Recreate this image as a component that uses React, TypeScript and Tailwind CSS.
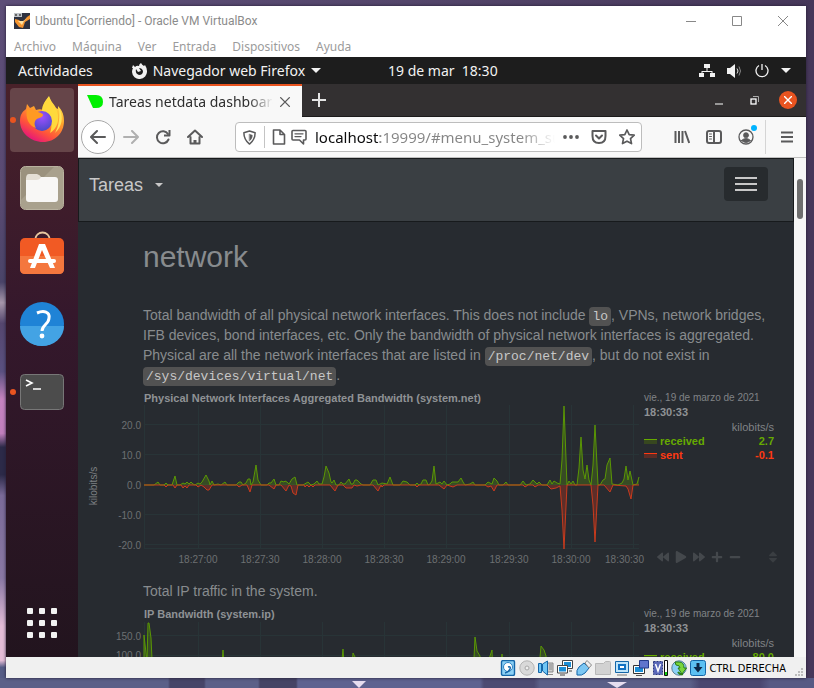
import type { ReactNode } from "react";
import {
  FaBackward, FaPlay, FaForward, FaPlus, FaMinus, FaSort,
} from "react-icons/fa";

type Point = [number, number];

const GRID_X = [56, 110, 172, 234, 296, 358, 421, 483, 545];
const TIMES = ["18:27:00", "18:27:30", "18:28:00", "18:28:30", "18:29:00", "18:29:30", "18:30:00"];

const RECEIVED: Point[] = [
  [0, 0], [10, 0], [14, 3], [16, 0], [20, 0], [22, 2], [24, 0], [28, 0], [31, 9], [33, 0], [36, 0], [39, 2], [41, 1],
  [43, 3], [45, 1], [47, 3], [49, 1], [51, 0], [54, 2], [56, 1], [58, 3], [62, 10], [65, 4], [66, 0], [68, 4], [70, 0],
  [74, 1], [77, 0], [81, 3], [83, 0], [92, 0], [95, 3], [97, 3], [99, 0], [102, 2], [104, 6], [106, 6], [107, 0],
  [109, 3], [112, 20], [114, 5], [117, 0], [123, 0], [125, 2], [127, 2], [130, 6], [132, 0], [135, 0], [137, 4],
  [140, 3], [141, 4], [143, 3], [145, 1], [148, 6], [151, 8], [153, 0], [159, 0], [164, 3], [167, 0], [170, 1],
  [173, 4], [175, 1], [178, 1], [180, 8], [182, 19], [185, 12], [187, 3], [188, 2], [190, 5], [192, 0], [195, 0],
  [197, 3], [199, 1], [201, 1], [205, 6], [207, 1], [209, 1], [211, 5], [213, 5], [217, 1], [219, 0], [226, 0],
  [229, 5], [232, 5], [234, 0], [238, 2], [243, 1], [246, 8], [249, 0], [256, 0], [259, 4], [263, 3], [266, 0],
  [271, 0], [273, 2], [275, 0], [277, 1], [279, 5], [282, 5], [284, 0], [286, 1], [288, 4], [290, 19], [292, 1],
  [296, 3], [298, 1], [300, 4], [303, 0], [306, 1], [308, 3], [314, 3], [317, 7], [319, 3], [321, 0], [326, 1],
  [329, 3], [331, 0], [341, 0], [344, 3], [348, 1], [350, 7], [353, 4], [355, 0], [359, 0], [362, 3], [364, 0],
  [376, 0], [379, 4], [382, 0], [386, 1], [389, 5], [393, 1], [395, 3], [398, 0], [403, 0], [406, 5], [408, 1],
  [410, 4], [413, 2], [416, 1], [418, 25], [420, 79], [423, 0], [425, 4], [427, 1], [429, 4], [431, 0], [433, 0],
  [435, 17], [437, 48], [439, 15], [441, 6], [443, 20], [445, 5], [447, 0], [449, 20], [451, 60], [454, 0],
  [456, 0], [459, 5], [461, 6], [463, 20], [466, 27], [468, 1], [474, 0], [478, 2], [480, 6], [482, 19], [484, 5],
  [486, 14], [489, 0], [493, 1], [495, 8],
];

const SENT: Point[] = [
  [0, 0], [20, 0], [22, 2], [24, 0], [29, 0], [31, 3], [33, 0], [37, 0], [39, 3], [41, 1], [43, 3], [45, 0], [52, 0],
  [54, 2], [57, 0], [60, 2], [63, 5], [65, 5], [68, 0], [93, 0], [95, 2], [98, 0], [103, 0], [106, 7], [108, 0],
  [125, 0], [130, 4], [132, 0], [137, 0], [142, 6], [145, 0], [147, 1], [149, 8], [152, 10], [154, 0], [160, 0],
  [161, 2], [163, 0], [165, 2], [167, 0], [169, 2], [171, 0], [186, 0], [191, 6], [194, 0], [199, 0], [202, 3],
  [208, 3], [210, 0], [213, 1], [217, 0], [229, 0], [234, 6], [237, 0], [238, 2], [240, 0], [271, 0], [273, 2],
  [275, 0], [295, 0], [300, 4], [303, 0], [309, 2], [313, 0], [341, 0], [344, 2], [347, 1], [350, 6], [353, 0],
  [379, 0], [381, 2], [384, 0], [389, 0], [391, 2], [394, 0], [403, 0], [407, 4], [412, 3], [416, 1], [418, 25],
  [420, 64], [423, 0], [447, 0], [449, 20], [451, 57], [454, 0], [460, 0], [466, 7], [469, 0], [482, 1], [484, 4],
  [487, 14], [489, 0], [495, 0],
];

const line = (data: Point[], sign: number) =>
  data.map(([x, h]) => `${56 + x},${82 - sign * h}`).join(" ");

function Code({ children }: { children: ReactNode }) {
  return (
    <code className="rounded bg-[#525252] px-[3px] py-0.5 font-['Liberation_Mono',monospace] text-[13px] leading-none text-[#c8c8c8]">
      {children}
    </code>
  );
}

function GridLines({ rows, bottom }: { rows: number[]; bottom: number }) {
  return (
    <g stroke="#283437" strokeWidth="1" shapeRendering="crispEdges">
      {GRID_X.map((x) => <line key={x} x1={x + 0.5} x2={x + 0.5} y1="2" y2={bottom} />)}
      {rows.map((y) => <line key={y} x1="56" x2="551" y1={y + 0.5} y2={y + 0.5} />)}
    </g>
  );
}

function NetChart() {
  return (
    <svg width="556" height="162" viewBox="0 2 556 162" className="shrink-0 overflow-visible font-['Liberation_Sans',Arial,sans-serif] text-[10px]" role="img" aria-label="Bandwidth chart">
      <GridLines rows={[21, 51, 81, 111, 141, 145]} bottom={146} />
      <polygon points={`56,82 ${line(RECEIVED, 1)} 551,82`} fill="#66aa00" fillOpacity=".25" />
      <polygon points={`56,82 ${line(SENT, -1)} 551,82`} fill="#fe3912" fillOpacity=".25" />
      <polyline points={line(RECEIVED, 1)} fill="none" stroke="#5a9704" strokeWidth="1" />
      <polyline points={line(SENT, -1)} fill="none" stroke="#c83b1d" strokeWidth="1" />
      <g fill="#6d7072">
        {["20.0", "10.0", "0.0", "-10.0", "-20.0"].map((t, i) => (
          <text key={t} x="53" y={26 + i * 30} textAnchor="end">{t}</text>
        ))}
        {TIMES.map((t, i) => (
          <text key={t} x={GRID_X[i + 1]} y="160" textAnchor="middle">{t}</text>
        ))}
        <text x="556" y="160" textAnchor="end">18:30:30</text>
      </g>
      <text transform="translate(9 83) rotate(-90)" textAnchor="middle" fill="#7d8083">kilobits/s</text>
    </svg>
  );
}

function IpChart() {
  return (
    <svg width="556" height="163" viewBox="0 1 556 163" className="shrink-0 font-['Liberation_Sans',Arial,sans-serif] text-[10px]" role="img" aria-label="IP bandwidth chart">
      <GridLines rows={[15, 35]} bottom={146} />
      <polygon
        points="56,60 56,15 59,42 60,3 61,3 63,18 65,60 133,60 135,30 137,60 252,60 255,29 257,60 263,60 265,33 267,37 269,60 385,60 387,17 389,31 392,36 393,60 402,36 404,30 405,60 412,60 414,34 416,60 450,60 453,26 456,30 458,36 460,60"
        fill="#66aa00" fillOpacity=".25" stroke="#5a9704" strokeWidth="1"
      />
      <g fill="#6d7072">
        <text x="53" y="20" textAnchor="end">150.0</text>
        <text x="53" y="39" textAnchor="end">100.0</text>
      </g>
    </svg>
  );
}

function Legend({ rows, children }: { rows: { name: string; value: string; tone: string; swatch: string }[]; children?: ReactNode }) {
  return (
    <aside className="flex w-[136px] shrink-0 flex-col">
      <p className="text-[10px] leading-[14px] text-[#808386]">vie., 19 de marzo de 2021</p>
      <p className="text-[11px] leading-[14px] font-bold text-[#8f9295]">18:30:33</p>
      <table className="w-[130px] text-[11px] leading-[14px] font-bold">
        <thead>
          <tr className="text-right font-normal text-[#808386]">
            <th colSpan={2} className="p-0 pt-[1px] text-right font-normal">kilobits/s</th>
          </tr>
        </thead>
        <tbody>
          {rows.map((r) => (
            <tr key={r.name} className={r.tone}>
              <td className="p-0">
                <span className="flex items-center gap-[3px]">
                  <span className={`h-[5px] w-[13px] border-t ${r.swatch}`} />
                  {r.name}
                </span>
              </td>
              <td className="p-0 text-right">{r.value}</td>
            </tr>
          ))}
        </tbody>
      </table>
      {children}
    </aside>
  );
}

const GREEN_ROW = { name: "received", tone: "text-[#66aa00]", swatch: "border-[#66aa00] bg-[#37471f]" };
const RED_ROW = { name: "sent", tone: "text-[#fe3912]", swatch: "border-[#fe3912] bg-[#5c2c26]" };

function DashboardPage() {
  return (
    <main className="min-w-0 flex-1 overflow-hidden bg-[#272b30] font-['Liberation_Sans',Arial,sans-serif] text-sm leading-5 text-[#888b8e]">
      <nav className="flex h-16 items-start justify-between border border-[#171a1c] bg-[#3a3f43] pr-[25px] pl-2.5">
        <button className="mt-3.5 flex items-center gap-3 text-lg leading-6 text-[#c8c8c8]">
          Tareas
          <span className="border-x-4 border-t-4 border-x-transparent border-t-[#c8c8c8]" />
        </button>
        <button aria-label="Menu" className="mt-2 flex h-[34px] w-11 flex-col items-center justify-center gap-1 rounded bg-[#272b2e]">
          <span className="h-0.5 w-[22px] bg-[#c8c8c8]" />
          <span className="h-0.5 w-[22px] bg-[#c8c8c8]" />
          <span className="h-0.5 w-[22px] bg-[#c8c8c8]" />
        </button>
      </nav>
      <div className="pr-5 pl-[65px]">
        <h1 className="mt-[18px] text-[30px] leading-[34px]">network</h1>
        <p className="mt-[31px]">
          Total bandwidth of all physical network interfaces. This does not include <Code>lo</Code>, VPNs, network bridges,
          IFB devices, bond interfaces, etc. Only the bandwidth of physical network interfaces is aggregated. Physical are
          all the network interfaces that are listed in <Code>/proc/net/dev</Code>, but do not exist in{" "}
          <Code>/sys/devices/virtual/net</Code>.
        </p>
      </div>
      <section className="mt-1.5 flex pl-2.5">
        <div>
          <h2 className="pl-14 text-[11px] leading-[14px] font-bold text-[#8f9295]">
            Physical Network Interfaces Aggregated Bandwidth (system.net)
          </h2>
          <NetChart />
        </div>
        <Legend rows={[{ ...GREEN_ROW, value: "2.7" }, { ...RED_ROW, value: "-0.1" }]}>
          <div className="mt-auto mb-[3px] flex items-center justify-between pl-[13px] text-[#44484c]">
            <div className="flex gap-1.5 text-xs">
              <button aria-label="Backward"><FaBackward className="size-3" /></button>
              <button aria-label="Play"><FaPlay className="size-3" /></button>
              <button aria-label="Forward"><FaForward className="size-3" /></button>
              <button aria-label="Zoom in"><FaPlus className="size-3" /></button>
              <button aria-label="Zoom out"><FaMinus className="size-3" /></button>
            </div>
            <button aria-label="Resize" className="text-[#3a3e42]"><FaSort className="size-3.5" /></button>
          </div>
        </Legend>
      </section>
      <p className="mt-3.5 pl-[65px]">Total IP traffic in the system.</p>
      <section className="mt-1.5 flex pl-2.5">
        <div>
          <h2 className="pl-14 text-[11px] leading-[14px] font-bold text-[#8f9295]">IP Bandwidth (system.ip)</h2>
          <IpChart />
        </div>
        <Legend rows={[{ ...GREEN_ROW, value: "80.0" }]} />
      </section>
    </main>
  );
}

const FirefoxMark = () => (
  <svg viewBox="0 0 46 48" className="h-12 w-[46px]">
    <defs>
      <linearGradient id="fx" x1=".8" y1=".1" x2=".3" y2="1">
        <stop offset="0" stopColor="#ffe94a" /><stop offset=".35" stopColor="#ffa42b" />
        <stop offset=".7" stopColor="#ff5539" /><stop offset="1" stopColor="#e4117f" />
      </linearGradient>
      <radialGradient id="fxg" cx=".5" cy=".3" r=".7">
        <stop offset="0" stopColor="#a050ff" /><stop offset="1" stopColor="#4a49c8" />
      </radialGradient>
    </defs>
    <path d="M7 13 8 8l3 4 4-2 2 4c3-1 5-1 7 0 0-6 3-10 6-14 2 6 5 8 7 12l2 1 0-3c5 5 6 10 6 15 0 12-9 21-21 21S1 37 1 25c0-6 2-9 6-12z" fill="url(#fx)" />
    <path d="M30 1c2 7 8 9 9 18 1 8-2 14-8 18 3-8 2-17-8-22 0-6 3-10 7-14z" fill="#ffd93c" />
    <path d="M40 12c5 9 3 19-4 25 4-7 5-16 4-25z" fill="#ffe45a" />
    <circle cx="23" cy="25" r="10" fill="url(#fxg)" />
    <path d="M8 13c5 2 8 1 11 3 2 1 5 1 5 3s-4 3-6 4c-3 2-3 6-1 9-7-2-11-10-9-19z" fill="#ff9a22" />
  </svg>
);

const Folder = () => (
  <svg viewBox="0 0 44 44" className="size-11">
    <rect x=".5" y=".5" width="43" height="43" rx="5" fill="#9b927e" stroke="#b9b29f" />
    <path d="M1 34 34 1h5q4 0 4 4v34q0 4-4 4H5q-4 0-4-4z" fill="#a9a18d" />
    <rect x="6" y="11" width="32" height="25" rx="3" fill="#f8f7f5" />
    <path d="M6 13q0-5 3-5h8q3 1 4 3-1 3-5 3H6z" fill="#e4dfd5" />
  </svg>
);

const Software = () => (
  <svg viewBox="0 3 44 44" className="size-11 overflow-visible">
    <path d="M15 9C16-1 29-1 30 9" fill="none" stroke="#e8c8a0" strokeWidth="2" />
    <rect y="7" width="44" height="36" rx="5" fill="#f15a24" />
    <path d="M0 25h44v13q0 5-5 5H5q-5 0-5-5z" fill="#f4773e" />
    <path d="M19 13h6l10 24h-5l-8-18-7 18h-5z" fill="#fff" />
    <path d="M10 30h24" stroke="#fff" strokeWidth="4" strokeLinecap="round" />
  </svg>
);

const Help = () => (
  <svg viewBox="0 0 44 44" className="size-11">
    <circle cx="22" cy="22" r="22" fill="#1f83d6" />
    <path d="M0 24h44a22 20 0 0 1-44 0z" fill="#43a3e4" />
    <path d="M17 11c7-3 13-1 12 5 0 6-7 7-7 13" fill="none" stroke="#fff" strokeWidth="3" />
    <circle cx="22" cy="34" r="2.4" fill="#fff" />
  </svg>
);

const Terminal = () => (
  <svg viewBox="0 0 44 36" className="h-9 w-11">
    <rect x=".5" y=".5" width="43" height="35" rx="4" fill="#4c4c4c" stroke="#777" />
    <path d="m6 6 6 3-6 3M13 15h8" fill="none" stroke="#fff" strokeWidth="1.6" />
  </svg>
);

function DockItem({ label, active, running, children }: { label: string; active?: boolean; running?: boolean; children: ReactNode }) {
  return (
    <button
      aria-label={label}
      className={`relative flex size-16 items-center justify-center rounded ${active ? "bg-[#664549]" : ""}`}
    >
      {running && <span className="absolute top-[29px] left-0 size-1.5 rounded-full bg-[#e95420]" />}
      {children}
    </button>
  );
}

function Dock() {
  return (
    <nav className="flex w-[72px] shrink-0 flex-col items-center gap-1 bg-gradient-to-b from-[#492129] via-[#35182c] via-40% to-[#22141e] pt-1">
      <DockItem label="Firefox" active running><FirefoxMark /></DockItem>
      <DockItem label="Archivos"><Folder /></DockItem>
      <DockItem label="Software"><Software /></DockItem>
      <DockItem label="Ayuda"><Help /></DockItem>
      <DockItem label="Terminal" running><Terminal /></DockItem>
      <button aria-label="Mostrar aplicaciones" className="mt-auto mb-[19px] grid grid-cols-3 gap-1.5">
        {Array.from({ length: 9 }, (_, i) => <span key={i} className="size-1.5 rounded-[1px] bg-[#f2f2f2]" />)}
      </button>
    </nav>
  );
}

const ToolIcon = ({ children, className = "size-4" }: { children: ReactNode; className?: string }) => (
  <svg viewBox="0 0 16 16" className={className} fill="none" stroke="#5a5a5b" strokeWidth="2" strokeLinecap="round" strokeLinejoin="round">
    {children}
  </svg>
);

function Browser() {
  return (
    <div className="flex min-w-0 flex-1 flex-col">
      <div className="flex h-[33px] shrink-0 items-stretch border-b border-[#1c1b1b] bg-[#333031]">
        <div className="-mb-px flex w-56 items-center gap-[5px] border-t-2 border-[#e95420] bg-[#f8f8f8] pl-[9px]">
          <svg viewBox="0 0 16 13" className="h-[13px] w-4 shrink-0"><path d="M0 0h9q7 0 7 7 0 6-7 6H6z" fill="#00f000" /></svg>
          <span className="ml-px w-[164px] overflow-hidden font-['Noto_Sans',sans-serif] text-sm whitespace-nowrap text-[#2e2e2e] [mask-image:linear-gradient(to_right,black_85%,transparent)]">
            Tareas netdata dashboard
          </span>
          <button aria-label="Cerrar pestaña"><ToolIcon className="size-3.5"><path strokeWidth="1.6" d="m3 3 10 10M13 3 3 13" /></ToolIcon></button>
        </div>
        <button aria-label="Nueva pestaña" className="px-2.5">
          <svg viewBox="0 0 14 14" className="size-3.5"><path d="M7 0v14M0 7h14" stroke="#e4e4e4" strokeWidth="2" /></svg>
        </button>
        <div className="ml-auto flex items-center gap-[26px] pr-[9px]">
          <button aria-label="Minimizar"><svg viewBox="0 0 9 9" className="size-[9px]"><path d="M0 8h8" stroke="#fff" /></svg></button>
          <button aria-label="Restaurar">
            <svg viewBox="0 0 9 9" className="size-[9px]" fill="none"><rect x="1" y="3" width="5" height="5" stroke="#fff" strokeWidth="1.3" /><path d="M3 .5h5.500v5.500" stroke="#aaa" /></svg>
          </button>
          <button aria-label="Cerrar" className="-ml-1.5 flex size-[18px] items-center justify-center rounded-full bg-[#e95420]">
            <svg viewBox="0 0 8 8" className="size-2"><path d="m0 0 8 8M8 0 0 8" stroke="#fff" strokeWidth="1.400" /></svg>
          </button>
        </div>
      </div>
      <div className="flex h-[41px] shrink-0 items-center border-b border-[#bfbfbf] bg-[#f8f8f8] pl-[3px]">
        <button aria-label="Atrás" className="flex size-[34px] items-center justify-center rounded-full border border-[#a8a8a8] bg-white">
          <ToolIcon><path d="M15 8H1.500M7 2 1 8l6 6" /></ToolIcon>
        </button>
        <div className="ml-2 flex items-center gap-4">
          <button aria-label="Adelante" className="opacity-45"><ToolIcon><path d="M1 8h13.500M9 2l6 6-6 6" /></ToolIcon></button>
          <button aria-label="Recargar"><ToolIcon><path d="M13.500 10.500A6 6 0 1 1 13 5" /><path d="M14.500 1v5.500H9" strokeLinecap="butt" /></ToolIcon></button>
          <button aria-label="Inicio"><ToolIcon><path d="M1 8l7-6.500L15 8M3.500 8v6.500h9V8" /><path d="M8 14v-3" strokeWidth="3" strokeLinecap="butt" /></ToolIcon></button>
        </div>
        <div className="ml-8 flex h-[30px] min-w-0 flex-1 items-center rounded border border-[#bdbdbd] bg-white pl-1.5">
          <button aria-label="Protección"><ToolIcon className="size-[15px]"><path strokeWidth="1.600" d="M8 1 14 3c0 6-2 9-6 12-4-3-6-6-6-12z" /><path d="M8 4.500 11 5.500c0 3-1 4.500-3 6z" fill="#5a5a5b" strokeWidth=".5" /></ToolIcon></button>
          <span className="mr-1.5 ml-[7px] h-[22px] w-px bg-[#c4c4c4]" />
          <button aria-label="Información"><ToolIcon><path strokeWidth="1.600" d="M2.500 1H9l4.500 4.500V15h-11zM9 1v4.500h4.500" /></ToolIcon></button>
          <button aria-label="Notificaciones" className="ml-1"><ToolIcon><path strokeWidth="1.600" d="M2 1.500h12q1 0 1 1V10q0 1-1 1h-1.500v4L8.500 11H2q-1 0-1-1V2.500q0-1 1-1z" /><path strokeWidth="1.300" d="M4 4.800h8M4 7.600h6" /></ToolIcon></button>
          <input
            aria-label="Dirección"
            readOnly
            value="localhost:19999/#menu_system_submenu_net"
            className="ml-2 w-0 min-w-0 flex-1 bg-[linear-gradient(to_right,#0c0c0d_65px,#858585_65px,#858585_205px,transparent_240px)] bg-clip-text font-['Noto_Sans',sans-serif] text-[15px] leading-6 text-transparent outline-none"
          />
          <button aria-label="Acciones" className="mr-3 ml-2"><svg viewBox="0 0 16 4" className="h-1 w-4" fill="#5a5a5b"><circle cx="2" cy="2" r="1.900" /><circle cx="8" cy="2" r="1.900" /><circle cx="14" cy="2" r="1.900" /></svg></button>
          <button aria-label="Pocket" className="mr-3"><ToolIcon><path d="M1.500 2h13v5q0 7-6.500 7T1.500 7z" /><path d="m5 6.500 3 3 3-3" /></ToolIcon></button>
          <button aria-label="Marcador" className="mr-1.5"><ToolIcon><path strokeWidth="1.700" d="m8 1 2.200 4.600 5 .6-3.700 3.400 1 5L8 12.200 3.500 14.600l1-5L.8 6.200l5-.6z" /></ToolIcon></button>
        </div>
        <div className="ml-8 flex items-center gap-4">
          <button aria-label="Biblioteca"><ToolIcon><path strokeLinecap="butt" d="M1.500 2v12M5 2v12M8.500 2v12M11 2l4.200 12" /></ToolIcon></button>
          <button aria-label="Barra lateral"><ToolIcon><rect x="1" y="2" width="14" height="12" rx="2" /><path d="M8 2v12" /><path strokeWidth="1" d="M3.500 5h2M3.500 7.500h2M3.500 10h2" /></ToolIcon></button>
          <button aria-label="Cuenta" className="relative">
            <ToolIcon><circle cx="8" cy="8" r="7" strokeWidth="1.300" /><circle cx="8" cy="6.200" r="2.600" fill="#5a5a5b" strokeWidth=".5" /><path d="M3.500 11.500q4.500-4 9 0-4.500 4-9 0z" fill="#5a5a5b" strokeWidth="1" /></ToolIcon>
            <span className="absolute -top-1 -right-[3px] size-1.5 rounded-full bg-[#00b3ff]" />
          </button>
        </div>
        <span className="ml-[11px] h-[34px] w-px bg-[#d5d5d5]" />
        <button aria-label="Abrir menú" className="mr-[11px] ml-[13px]"><ToolIcon><path strokeLinecap="butt" d="M2 3.500h12M2 8h12M2 12.500h12" /></ToolIcon></button>
      </div>
      <div className="flex min-h-0 flex-1">
        <DashboardPage />
        <div className="w-3 shrink-0 bg-[#f6f6f6] pt-[21px]">
          <div className="mx-[3px] h-10 rounded-full bg-[#6e6e6e]" />
        </div>
      </div>
    </div>
  );
}

function TopBar() {
  return (
    <header className="flex h-[27px] shrink-0 items-center bg-[#1d1d1d] px-3 font-['Noto_Sans',sans-serif] text-sm text-[#f2f2f2]">
      <button className="mr-[38px]">Actividades</button>
      <button className="flex items-center gap-1.5">
        <svg viewBox="0 0 16 16" className="size-4" fill="#f2f2f2">
          <path fillRule="evenodd" d="M1 5 2 2l2 2q2-2 4-1 0-2 2-3 1 2 3 3l1-1q2 3 2 6a7.500 7.500 0 0 1-15 1q0-2 1-4zM5 6q-1 5 3 6 4 0 4-4-1-3-4-3l2 3-3 1z" />
        </svg>
        Navegador web Firefox
        <span className="border-x-[5px] border-t-[5px] border-x-transparent border-t-[#f2f2f2]" />
      </button>
      <time className="ml-[67px] whitespace-pre">19 de mar  18:30</time>
      <div className="ml-auto flex items-center gap-3">
        <svg viewBox="0 0 16 14" className="h-3.5 w-4" fill="#f2f2f2"><path d="M5 0h6v4H5zM0 9h5v4H0zM11 9h5v4h-5zM7.500 4h1v3h5v2h-1V8h-9v1h-1V7h5z" /></svg>
        <svg viewBox="0 0 16 14" className="h-3.5 w-4"><path d="M0 4h3l5-4v14l-5-4H0z" fill="#f2f2f2" /><path d="M10 4.500q2 2.500 0 5" fill="none" stroke="#ddd" /><path d="M12 2.500q3 4.500 0 9" fill="none" stroke="#888" /></svg>
        <svg viewBox="0 0 14 14" className="size-3.5" fill="none" stroke="#f2f2f2" strokeWidth="1.300"><path d="M7 0v6M4 1.500a6 6 0 1 0 6 0" /></svg>
        <span className="mr-[3px] border-x-[5px] border-t-[5px] border-x-transparent border-t-[#f2f2f2]" />
      </div>
    </header>
  );
}

const Status = ({ children }: { children: ReactNode }) => (
  <svg viewBox="0 0 16 16" className="size-4" fill="none" strokeWidth="1">{children}</svg>
);

function StatusBar() {
  return (
    <footer className="flex h-[21px] shrink-0 items-center justify-end gap-[3px] bg-[#f0f0f0]">
      <Status><rect x="1.500" y=".5" width="13" height="15" rx="1.500" fill="#8bd0f5" stroke="#1466a8" strokeWidth="1.400" /><circle cx="8" cy="7" r="4.500" fill="#fff" stroke="#2d83c4" /><path d="M8 7q3-1 2 2t-5 4" stroke="#1466a8" strokeWidth="1.500" /></Status>
      <Status><circle cx="8" cy="8" r="7.200" fill="#d9d9d9" stroke="#b3b3b3" /><circle cx="8" cy="8" r="2" fill="#eee" stroke="#a8a8a8" /></Status>
      <Status><path d="M9 3h6v9H9M11 5h3M11 7h3M11 9h3M8 14.500h7" fill="#ccc" stroke="#8a8a8a" /><path d="M.5 3.500h3v9h-3zM4.500 4 9.500 1v14l-5-4z" fill="#6fc6f5" stroke="#1466a8" /></Status>
      <Status><path d="M5.500.500h10v8h-10z" fill="#fff" stroke="#444" /><path d="M7 2h7v5H7z" fill="#1c8fd6" /><path d="M.5 5.500h10v7.500H.500z" fill="#fff" stroke="#444" /><path d="M2 7h7v4.500H2z" fill="#1c8fd6" /><path d="M3 15h5M12 11h3" stroke="#444" /></Status>
      <Status><path d="M1 15q-1-5 2-8l5-4 5 5-4 5q-3 3-8 2z" fill="#7cc7f3" stroke="#1466a8" /><path d="m9 3 2-2.500L15.500 5 13 8z" fill="#eee" stroke="#888" /></Status>
      <Status><path d="M.5 14.500v-11h8l2-2h4q1 0 1 1v12z" fill="#d2d2d2" stroke="#b8b8b8" /></Status>
      <Status><path d="M1.500 1.500h13v11h-13z" fill="#bde4fa" stroke="#1466a8" /><path d="M5 5h6v4H5z" fill="#fff" stroke="#1172c4" strokeWidth="2" /><path d="M3 15h10" stroke="#777" /></Status>
      <Status><path d="M.5 5.500h11v8H.500z" fill="#fff" stroke="#333" /><path d="M2 7h8v5H2z" fill="#1c8fd6" /><path d="M6.500.500h9v7.500h-9z" fill="#5f74cc" stroke="#233a8a" /><path d="M3 15.500h6" stroke="#555" /></Status>
      <Status><path d="M1.500 1.500h9v13h-9z" fill="#5967b8" stroke="#2c3980" strokeDasharray="2 1" /><path d="m3.500 4 2.500 7 2.500-7" stroke="#fff" strokeWidth="1.500" /><path d="M12.500.500h3v15h-3z" fill="#fff" stroke="#111" /><path d="M14 12v3" stroke="#1c1" strokeWidth="2" /></Status>
      <Status><circle cx="8" cy="8" r="7.200" fill="#8bd0f5" stroke="#5a7f99" /><path d="M4 2h4q5 0 5 6h2.500L11 14 7 8h2q0-3-4-3z" fill="#7ad63c" stroke="#2b7d12" /><path d="M7 12q2 3 5 2" stroke="#2b7d12" strokeWidth="2" /></Status>
      <Status><rect x=".5" y=".5" width="15" height="15" rx="2" fill="#5cc0f2" stroke="#1466a8" /><path d="M6.500 3h3v4h3L8 12.500 3.500 7h3z" fill="#0d2747" /></Status>
      <span className="pt-[3px] font-['DejaVu_Sans_Condensed','DejaVu_Sans',sans-serif] text-[11px] leading-4 text-black">CTRL DERECHA</span>
      <svg viewBox="0 0 8 8" className="mr-[3px] mb-0.5 ml-1.5 size-2 self-end" fill="#bcbcbc"><path d="M6 0h2v2H6zM6 3h2v2H6zM6 6h2v2H6zM3 3h2v2H3zM3 6h2v2H3zM0 6h2v2H0z" /></svg>
    </footer>
  );
}

function Wallpaper() {
  return (
    <div aria-hidden="true" className="absolute inset-0 -z-10 bg-[linear-gradient(to_right,#5d4e78,#54466b_50%,#463759)]">
      <div className="absolute inset-y-0 left-0 w-1.5 bg-[linear-gradient(to_bottom,#5d4e78_0%,#5a4a72_28%,#4a4468_41%,#a797ab_44%,#55466e_47%,#5a5080_54%,#c583c0_58%,#c07fbc_63%,#2c2a48_65%,#2c2a48_69%,#7a6a98_72%,#8a78a4_84%,#e3bcd6_91%,#e3bcd6_96%,#565c86_97%)]" />
      <div className="absolute inset-x-0 bottom-0 h-2.5 bg-[linear-gradient(to_right,#5b6088_0_168px,#464568_170px_204px,#5b6088_206px_258px,#454465_260px_296px,#5e6390_298px_480px,#4c4b72_484px_534px,#5b6088_540px_690px,#4a4770_700px_760px,#575a84_770px)]" />
      <span className="absolute bottom-0 left-[352px] border-x-[7px] border-t-[7px] border-x-transparent border-t-[#e6def0]" />
      <span className="absolute bottom-0 left-[607px] border-x-[10px] border-t-[6px] border-x-transparent border-t-[#e6def0]" />
    </div>
  );
}

export default function App() {
  return (
    <div className="relative isolate flex h-screen overflow-hidden pt-1.5 pr-2 pb-2.5 pl-1.5">
      <Wallpaper />
      <div className="flex min-w-0 flex-1 flex-col bg-white shadow-[0_0_3px_#221c33]">
        <div className="flex h-[30px] shrink-0 items-center gap-[5px] pl-2 font-['Roboto','Noto_Sans',sans-serif] text-xs text-[#8b8b8b]">
          <svg viewBox="0 0 16 16" className="size-4">
            <path d="M0 0h16v16H0z" fill="#2e3140" />
            <path d="m1 6 4 1 3 3 5-6 3-2v4l-5 3-2 6-4-1-4-5z" fill="#f59530" /><path d="m4 8 4 4 2-4 4-3-5 3z" fill="#ffe2a0" />
            <path d="M0 0h8v4H0z" fill="#bfc3c9" /><path d="M1 1h2v2H1zM5 1h2v2H5z" fill="#666" />
          </svg>
          <h1>Ubuntu [Corriendo] - Oracle VM VirtualBox</h1>
          <div className="ml-auto flex gap-9 pr-[18px]">
            <button aria-label="Minimizar ventana"><svg viewBox="0 0 10 10" className="size-2.5"><path d="M0 5.500h10" stroke="#888" /></svg></button>
            <button aria-label="Maximizar ventana"><svg viewBox="0 0 10 10" className="size-2.5"><path d="M.5.500h9v9h-9z" fill="none" stroke="#888" /></svg></button>
            <button aria-label="Cerrar ventana"><svg viewBox="0 0 10 10" className="size-2.5"><path d="m0 0 10 10M10 0 0 10" stroke="#888" /></svg></button>
          </div>
        </div>
        <nav className="flex h-[21px] shrink-0 items-center gap-4 pl-2 font-['Noto_Sans',sans-serif] text-xs text-[#9b9b9b]">
          {["Archivo", "Máquina", "Ver", "Entrada", "Dispositivos", "Ayuda"].map((m) => <button key={m}>{m}</button>)}
        </nav>
        <TopBar />
        <div className="flex min-h-0 flex-1">
          <Dock />
          <Browser />
        </div>
        <StatusBar />
      </div>
    </div>
  );
}
